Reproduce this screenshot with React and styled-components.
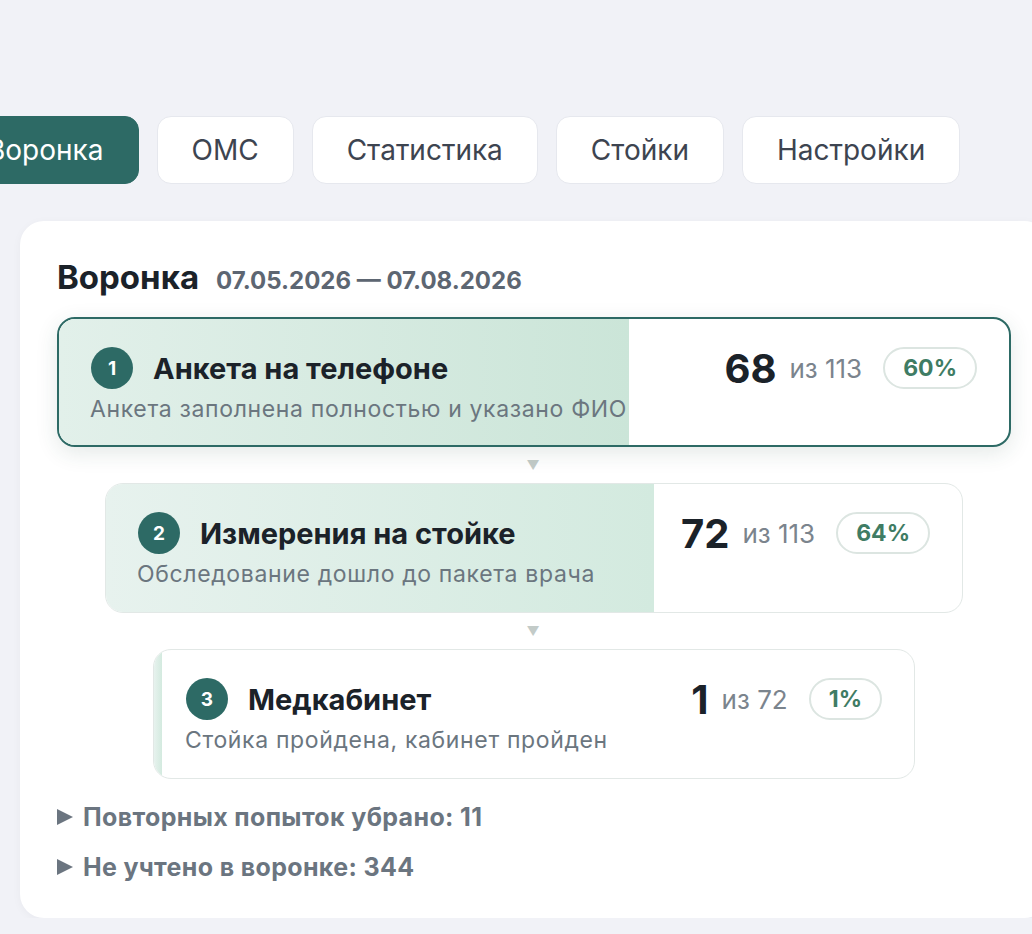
import React from "react";
import styled, { createGlobalStyle } from "styled-components";

const GlobalStyle = createGlobalStyle`
  html, body {
    margin: 0;
    padding: 0;
    overflow: hidden;
    background: #f1f2f7;
  }
  body {
    font-family: Inter, "Noto Sans", sans-serif;
    color: #1b2229;
  }
`

const Page = styled.div`
  width: 1100px;
  padding: 116px 0 0 20px;
  box-sizing: border-box;
`
const Tabs = styled.div`
  display: flex;
  gap: 18px;
  margin-left: -68px;
`
const Tab = styled.div`
  height: 68px;
  padding: 0 34px;
  display: flex;
  align-items: center;
  box-sizing: border-box;
  border-radius: 14px;
  font-size: 28px;
  background: ${p => (p.active ? "#2d6a65" : "#ffffff")};
  color: ${p => (p.active ? "#ffffff" : "#3d4450")};
  border: 1.5px solid ${p => (p.active ? "#2d6a65" : "#e6e8ee")};
`
const Card = styled.div`
  margin-top: 37px;
  width: 1028px;
  box-sizing: border-box;
  background: #ffffff;
  border-radius: 24px;
  padding: 36px 37px 36px 37px;
  box-shadow: 0 2px 10px rgba(20, 30, 50, 0.04);
`
const Header = styled.div`
  display: flex;
  align-items: baseline;
  gap: 17px;
`
const Title = styled.div`
  font-size: 33px;
  font-weight: 700;
  color: #1b2229;
`
const Period = styled.div`
  font-size: 24px;
  font-weight: 700;
  color: #5d6672;
`
const Funnel = styled.div`
  margin-top: 20px;
  display: flex;
  flex-direction: column;
  align-items: center;
`
const Step = styled.div`
  position: relative;
  width: ${p => p.width}px;
  height: 130px;
  box-sizing: border-box;
  border-radius: 18px;
  overflow: hidden;
  background: #ffffff;
  border: ${p => (p.active ? "2px solid #2d6a65" : "1.5px solid #e2e8e6")};
  box-shadow: ${p => (p.active ? "0 6px 22px rgba(30, 70, 60, 0.12)" : "none")};
`
const Fill = styled.div`
  position: absolute;
  left: 0;
  top: 0;
  bottom: 0;
  background: linear-gradient(90deg, ${p => (p.active ? "#e2f0ea, #cbe5d8" : "#e7f2ee, #d3eadf")});
`
const StepBody = styled.div`
  position: relative;
  display: flex;
  justify-content: space-between;
  height: 100%;
  box-sizing: border-box;
  padding: 28px 32px 0 32px;
`
const StepInfo = styled.div`
  display: flex;
  flex-direction: column;
`
const StepHead = styled.div`
  display: flex;
  align-items: center;
  gap: 20px;
`
const Num = styled.div`
  width: 42px;
  height: 42px;
  border-radius: 50%;
  background: #2d6a65;
  color: #ffffff;
  font-size: 19px;
  font-weight: 700;
  display: flex;
  align-items: center;
  justify-content: center;
`
const StepTitle = styled.div`
  font-size: 29px;
  font-weight: 700;
  color: #1b2229;
`
const StepDesc = styled.div`
  margin-top: 6px;
  margin-left: -1px;
  font-size: 23px;
  letter-spacing: 0.65px;
  color: #6b767f;
  white-space: nowrap;
`
const Stats = styled.div`
  display: flex;
  align-items: center;
  height: 42px;
`
const Count = styled.span`
  font-size: 40px;
  font-weight: 700;
  color: #1b2229;
  margin-right: 13px;
`
const Total = styled.span`
  font-size: 26px;
  color: #7b848d;
  margin-right: 21px;
`
const Pill = styled.span`
  height: 42px;
  box-sizing: border-box;
  padding: 0 18px;
  border: 2px solid #dce5e1;
  border-radius: 21px;
  display: flex;
  align-items: center;
  font-size: 23px;
  font-weight: 700;
  color: #3f7c64;
`
const Arrow = styled.div`
  height: 36px;
  display: flex;
  align-items: center;
  justify-content: center;
  font-size: 13px;
  color: #c3cbc8;
  margin-left: -2px;
`
const Notes = styled.div`
  margin-top: 23px;
  display: flex;
  flex-direction: column;
  gap: 20px;
`
const Note = styled.div`
  display: flex;
  align-items: center;
  gap: 6px;
  font-size: 25px;
  letter-spacing: 0.35px;
  font-weight: 700;
  color: #6b7580;
  &::before {
    content: "";
    width: 0;
    height: 0;
    border-top: 8px solid transparent;
    border-bottom: 8px solid transparent;
    border-left: 16px solid #6b7580;
    margin-right: 4px;
  }
`

const steps = [
  { n: 1, title: "Анкета на телефоне", desc: "Анкета заполнена полностью и указано ФИО", count: 68, total: 113, pct: 60, width: 954, active: true },
  { n: 2, title: "Измерения на стойке", desc: "Обследование дошло до пакета врача", count: 72, total: 113, pct: 64, width: 858 },
  { n: 3, title: "Медкабинет", desc: "Стойка пройдена, кабинет пройден", count: 1, total: 72, pct: 1, width: 762 },
]

const tabs = ["Воронка", "ОМС", "Статистика", "Стойки", "Настройки"]

const App = () => {
  return (
    <>
      <GlobalStyle />
      <Page>
        <Tabs>
          {tabs.map((t, i) => (
            <Tab key={t} active={i === 0}>{t}</Tab>
          ))}
        </Tabs>
        <Card>
          <Header>
            <Title>Воронка</Title>
            <Period>07.05.2026 — 07.08.2026</Period>
          </Header>
          <Funnel>
            {steps.map((s, i) => (
              <React.Fragment key={s.n}>
                {i > 0 && <Arrow>▼</Arrow>}
                <Step width={s.width} active={s.active}>
                  <Fill active={s.active} style={{ width: `${s.pct}%` }} />
                  <StepBody>
                    <StepInfo>
                      <StepHead>
                        <Num>{s.n}</Num>
                        <StepTitle>{s.title}</StepTitle>
                      </StepHead>
                      <StepDesc>{s.desc}</StepDesc>
                    </StepInfo>
                    <Stats>
                      <Count>{s.count}</Count>
                      <Total>из {s.total}</Total>
                      <Pill>{s.pct}%</Pill>
                    </Stats>
                  </StepBody>
                </Step>
              </React.Fragment>
            ))}
          </Funnel>
          <Notes>
            <Note>Повторных попыток убрано: 11</Note>
            <Note>Не учтено в воронке: 344</Note>
          </Notes>
        </Card>
      </Page>
    </>
  )
}

export default App
